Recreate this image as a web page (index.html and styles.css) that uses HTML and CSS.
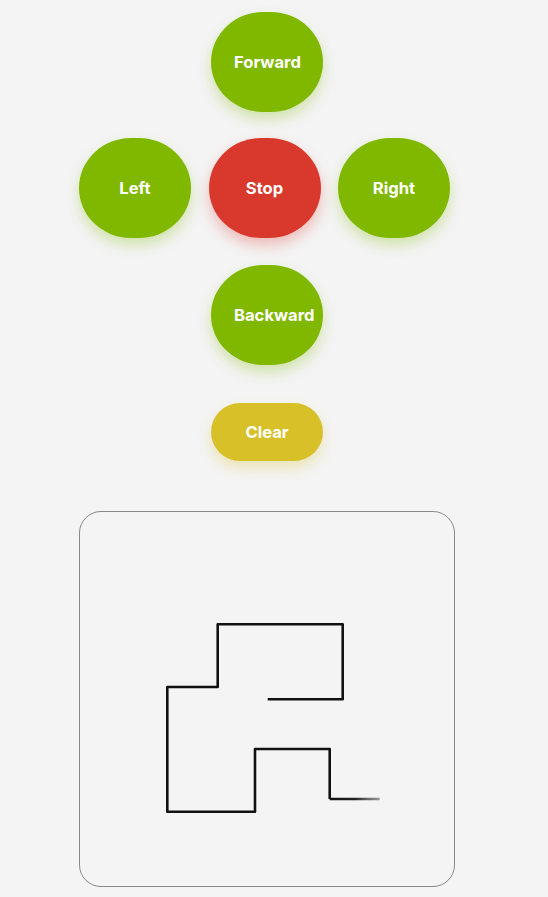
FILE: index.html
```html
<!DOCTYPE html>
<html>
<head>
<meta charset="utf-8">
<link rel="stylesheet" href="styles.css">
</head>
<body>
<div class="app">
  <div class="row center">
    <button class="btn go"><span class="label">Forward</span></button>
  </div>
  <div class="row middle">
    <button class="btn go"><span class="label">Left</span></button>
    <button class="btn stop"><span class="label">Stop</span></button>
    <button class="btn go"><span class="label">Right</span></button>
  </div>
  <div class="row center">
    <button class="btn go"><span class="label">Backward</span></button>
  </div>
  <div class="row center clear-row">
    <button class="btn clear"><span class="label">Clear</span></button>
  </div>
  <div class="canvas">
    <svg width="374" height="374" viewBox="0 0 374 374">
      <defs>
        <linearGradient id="fade" x1="250" y1="0" x2="300" y2="0" gradientUnits="userSpaceOnUse">
          <stop offset="0" stop-color="#111"/>
          <stop offset="0.5" stop-color="#222"/>
          <stop offset="0.75" stop-color="#666"/>
          <stop offset="1" stop-color="#999"/>
        </linearGradient>
      </defs>
      <polyline points="187.7,187.3 262.7,187.3 262.7,112.3 137.7,112.3 137.7,175 87.3,175 87.3,299.7 175,299.7 175,237 249.7,237 249.7,287" fill="none" stroke="#111" stroke-width="2.6" stroke-linejoin="round"/>
      <line x1="249.7" y1="287" x2="299.7" y2="287" stroke="url(#fade)" stroke-width="2.6"/>
    </svg>
  </div>
</div>
</body>
</html>
```
FILE: styles.css
```css
html, body {
  margin: 0;
  padding: 0;
  background: #f4f4f4;
}
body {
  font-family: Inter, "Liberation Sans", sans-serif;
}
.app {
  width: 376px;
  padding: 12px 0 0 79px;
  display: flex;
  flex-direction: column;
}
.row {
  display: flex;
}
.center {
  justify-content: center;
}
.middle {
  gap: 17.5px;
  margin: 26px 0 27px;
}
.btn {
  box-sizing: border-box;
  width: 112px;
  height: 100px;
  border: none;
  border-radius: 52px / 50px;
  color: #fff;
  font-family: Inter, "Liberation Sans", sans-serif;
  font-weight: 700;
  font-size: 16.6px;
  padding: 0 23px;
  white-space: nowrap;
  display: flex;
  align-items: center;
  justify-content: flex-start;
  cursor: pointer;
}
.label {
  display: block;
  width: 100%;
  text-align: center;
}
.go {
  background: #80b800;
  box-shadow: 0 7px 14px rgba(128, 184, 0, 0.3);
}
.stop {
  background: #d9382c;
  box-shadow: 0 7px 14px rgba(217, 56, 44, 0.3);
}
.clear-row {
  margin-top: 38px;
}
.clear {
  height: 58px;
  border-radius: 29px;
  background: #d8c028;
  box-shadow: 0 7px 14px rgba(216, 192, 40, 0.3);
}
.canvas {
  margin-top: 50px;
  width: 374px;
  height: 374px;
  border: 1px solid #888;
  border-radius: 22px;
  overflow: hidden;
}
.canvas svg {
  display: block;
}
```
